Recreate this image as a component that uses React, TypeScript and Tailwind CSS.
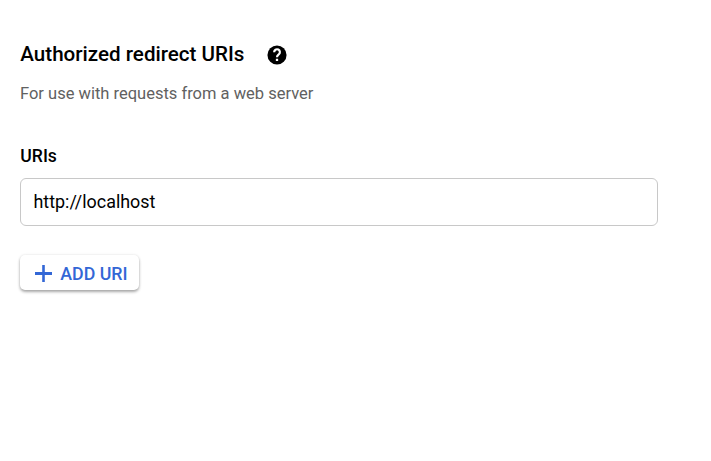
export default function App() {
  return (
    <main className="flex h-[461px] w-[711px] flex-col items-start bg-white pl-5 pt-10 font-[Roboto,sans-serif] text-black">
      <div className="flex h-7 items-center">
        <h2 className="pl-[0.3px] text-[20.6px] leading-7 font-medium whitespace-nowrap">Authorized redirect URIs</h2>
        <svg className="mt-[2px] ml-[21.5px] size-[22px]" viewBox="0.5 0.5 23 23" fill="currentColor" aria-label="Help">
          <circle cx="12" cy="12" r="10" />
          <path d="M9 9a3 3 0 1 1 4.8 2.4C12.6 12.3 12 12.8 12 14.3" fill="none" stroke="white" strokeWidth="2.3" />
          <path d="M10.8 16h2.4v2.3h-2.4z" fill="white" />
        </svg>
      </div>
      <p className="mt-[14px] text-[16.5px] leading-6 text-[#616161]">For use with requests from a web server</p>
      <label htmlFor="uri" className="mt-[38px] pl-[0.3px] text-[17.6px] leading-6 font-medium">URIs</label>
      <input id="uri" defaultValue="http://localhost" className="mt-[10px] h-12 w-[638px] rounded-md border border-[#c8c8c8] px-[12.5px] pb-[2px] text-[17.9px] outline-none" />
      <button className="mt-[29px] flex h-[35px] w-[119px] items-center rounded-[5px] pt-[3px] pl-[15px] text-[17.8px] font-medium whitespace-nowrap text-[#3367d6] shadow-[0_2px_3px_rgba(0,0,0,0.32),0_0_3px_rgba(0,0,0,0.1)]">
        <svg className="mr-[8.3px] mb-[2px] size-[17px]" viewBox="0 0 17 17" fill="currentColor" aria-hidden="true">
          <path d="M7.2 0h2.6v7.1H17v2.8H9.8V17H7.2V9.9H0V7.1h7.2z" />
        </svg>
        ADD URI
      </button>
    </main>
  );
}
